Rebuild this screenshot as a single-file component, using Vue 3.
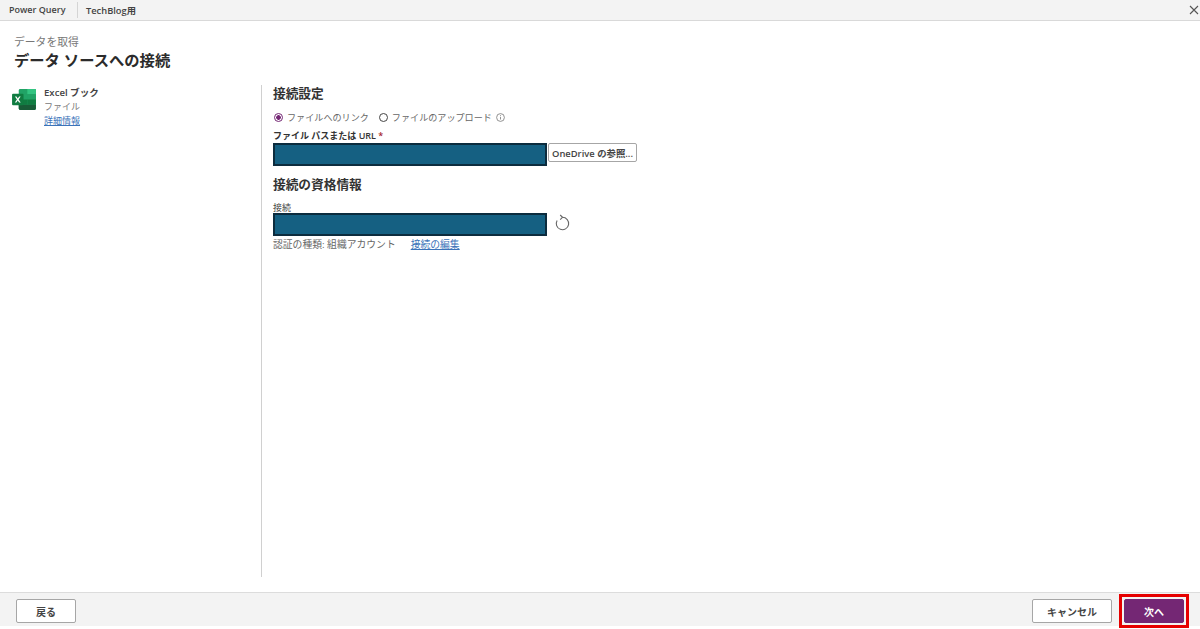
<script setup>
const sourceName = "Excel ブック";
const sourceType = "ファイル";
</script>

<template>
  <div class="page">
    <header class="topbar">
      <span class="app-name">Power Query</span>
      <span class="env-name">TechBlog用</span>
      <svg class="close" width="10" height="10" viewBox="0 0 10 10">
        <path d="M1 1 L9 9 M9 1 L1 9" stroke="#555" stroke-width="1.1" fill="none" />
      </svg>
    </header>

    <main class="main">
      <div class="heading">
        <div class="crumb">データを取得</div>
        <h1 class="title">データ ソースへの接続</h1>
      </div>

      <div class="columns">
        <aside class="source">
          <svg class="excel" width="24" height="21" viewBox="0 0 25 22">
            <rect x="7" y="0" width="18" height="22" rx="1.5" fill="#21a366" />
            <rect x="16" y="0" width="9" height="5.5" fill="#33c481" />
            <rect x="7" y="5.5" width="9" height="5.5" fill="#21a366" />
            <rect x="16" y="5.5" width="9" height="5.5" fill="#21a366" />
            <rect x="7" y="11" width="9" height="5.5" fill="#107c41" />
            <rect x="16" y="11" width="9" height="5.5" fill="#107c41" />
            <path d="M7 16.5h18V20.5a1.5 1.5 0 0 1-1.5 1.5H8.5A1.5 1.5 0 0 1 7 20.5z" fill="#185c37" />
            <rect x="0" y="5" width="12" height="12" rx="1" fill="#107c41" />
            <path d="M3 7.8 L5.1 11 L2.9 14.2 H4.5 L5.95 12 L7.4 14.2 H9.1 L6.9 11 L9 7.8 H7.4 L6 10 L4.6 7.8 Z" fill="#fff" />
          </svg>
          <div class="source-text">
            <div class="source-name">{{ sourceName }}</div>
            <div class="source-type">{{ sourceType }}</div>
            <a class="link">詳細情報</a>
          </div>
        </aside>

        <section class="form">
          <h2 class="section-title">接続設定</h2>
          <div class="radios">
            <span class="radio checked"></span>
            <span class="radio-label">ファイルへのリンク</span>
            <span class="radio"></span>
            <span class="radio-label upload">ファイルのアップロード</span>
            <svg class="info" width="9" height="9" viewBox="0 0 9 9">
              <circle cx="4.5" cy="4.5" r="3.9" fill="none" stroke="#777" stroke-width="0.8" />
              <path d="M4.5 4v2.5M4.5 2.2v1" stroke="#777" stroke-width="0.8" />
            </svg>
          </div>
          <label class="field-label bold">ファイル パスまたは URL <span class="req">*</span></label>
          <div class="field-row">
            <div class="masked"></div>
            <button class="browse">OneDrive の参照...</button>
          </div>

          <h2 class="section-title second">接続の資格情報</h2>
          <label class="field-label conn">接続</label>
          <div class="field-row tight">
            <div class="masked"></div>
            <svg class="refresh" width="16" height="17" viewBox="0 0 16 17">
              <path d="M7.5 3.3 A6.2 6.2 0 1 1 2.1 6.4" fill="none" stroke="#666" stroke-width="1.1" />
              <path d="M5.2 1 L7.5 3.3 L5.2 5.6" fill="none" stroke="#666" stroke-width="1.1" />
            </svg>
          </div>
          <div class="auth">
            <span>認証の種類: 組織アカウント</span>
            <a class="link">接続の編集</a>
          </div>
        </section>
      </div>
    </main>

    <footer class="footer">
      <button class="btn">戻る</button>
      <div class="footer-right">
        <button class="btn cancel">キャンセル</button>
        <button class="btn next">次へ</button>
      </div>
    </footer>
  </div>
</template>

<style>
html,
body {
  margin: 0;
  background: #fff;
}
</style>

<style scoped>
.page {
  width: 1200px;
  height: 629px;
  display: flex;
  flex-direction: column;
  overflow: hidden;
  font-family: "Open Sans", "Noto Sans CJK JP", sans-serif;
  color: #333;
  background: #fff;
}

.topbar {
  height: 21px;
  box-sizing: border-box;
  flex: none;
  display: flex;
  align-items: center;
  background: #f3f3f3;
  border-bottom: 1px solid #d9d9d9;
  font-size: 9px;
  font-weight: 600;
  color: #444;
  padding-left: 9px;
}

.app-name {
  padding-right: 11px;
  border-right: 1px solid #d4d4d4;
  line-height: 16px;
  width: 57px;
  white-space: nowrap;
}

.env-name {
  padding-left: 8px;
  font-size: 9.3px;
}

.close {
  margin-left: auto;
  margin-right: 1px;
}

.main {
  flex: 1;
  min-height: 0;
  display: flex;
  flex-direction: column;
}

.heading {
  padding: 14px 0 0 14px;
}

.crumb {
  font-size: 10.8px;
  line-height: 14px;
  color: #777;
}

.title {
  margin: 1px 0 0;
  font-size: 15.3px;
  line-height: 20px;
  font-weight: 700;
  color: #2b2b2b;
}

.columns {
  display: flex;
  margin-top: 15px;
  height: 492px;
}

.source {
  width: 262px;
  flex: none;
  box-sizing: border-box;
  padding: 4px 0 0 12px;
  display: flex;
  gap: 8px;
  border-right: 1px solid #d0d0d0;
}

.excel {
  flex: none;
}

.source-text {
  font-size: 9px;
  line-height: 14px;
  margin-top: -3px;
}

.source-name {
  font-size: 9.6px;
  font-weight: 600;
  color: #444;
}

.source-type {
  color: #777;
}

.link {
  color: #3b73b9;
  text-decoration: underline;
}

.form {
  padding-left: 11px;
  margin-top: -1px;
}

.section-title {
  margin: 0;
  font-size: 12.7px;
  line-height: 18px;
  font-weight: 700;
  color: #333;
}

.section-title.second {
  margin-top: 9px;
}

.radios {
  display: flex;
  align-items: center;
  height: 14px;
  margin-top: 8px;
  font-size: 9.1px;
  color: #666;
}

.radio {
  width: 7px;
  height: 7px;
  border: 1px solid #444;
  border-radius: 50%;
  margin-right: 4px;
  flex: none;
}

.radio.checked {
  margin-left: 1px;
  border-color: #742774;
  background: radial-gradient(circle, #742774 0 2px, #fff 2.6px);
}

.radio-label {
  margin-right: 10px;
}

.radio-label.upload {
  margin-right: 4px;
}

.info {
  flex: none;
}

.field-label {
  display: block;
  font-size: 9px;
  line-height: 12px;
  color: #444;
}

.field-label.bold {
  margin-top: 6px;
  font-weight: 600;
  color: #333;
}

.field-label.conn {
  margin-top: 9px;
  line-height: 11px;
}

.req {
  color: #a4262c;
}

.field-row {
  display: flex;
  align-items: flex-start;
  margin-top: 1px;
}

.field-row.tight {
  margin-top: 0;
}

.masked {
  width: 274px;
  height: 23px;
  box-sizing: border-box;
  background: #156082;
  border: 2px solid #0c2c3e;
}

.browse {
  margin-left: 1px;
  width: 89px;
  height: 19px;
  padding: 0;
  background: #fff;
  border: 1px solid #a6a6a6;
  border-radius: 2px;
  font-family: inherit;
  font-size: 9.4px;
  font-weight: 600;
  color: #444;
}

.refresh {
  margin-left: 8px;
  margin-top: 1px;
}

.auth {
  display: flex;
  gap: 15px;
  margin-top: 2px;
  font-size: 9.8px;
  line-height: 14px;
  color: #666;
}

.footer {
  height: 34px;
  flex: none;
  margin-bottom: 3px;
  box-sizing: border-box;
  display: flex;
  align-items: flex-start;
  justify-content: space-between;
  padding: 6px 16px 0;
  background: #f3f3f3;
  border-top: 1px solid #dcdcdc;
}

.footer-right {
  display: flex;
  gap: 12px;
}

.btn {
  width: 60px;
  height: 24px;
  padding: 0;
  background: #fff;
  border: 1px solid #a6a6a6;
  border-radius: 2px;
  font-family: inherit;
  font-size: 10px;
  font-weight: 600;
  color: #444;
}

.cancel {
  width: 80px;
}

.next {
  position: relative;
  background: #742774;
  border-color: #742774;
  color: #fff;
}

/* red highlight frame over the button */
.next::after {
  content: "";
  position: absolute;
  inset: -6px;
  border: 3px solid #e60000;
}
</style>
